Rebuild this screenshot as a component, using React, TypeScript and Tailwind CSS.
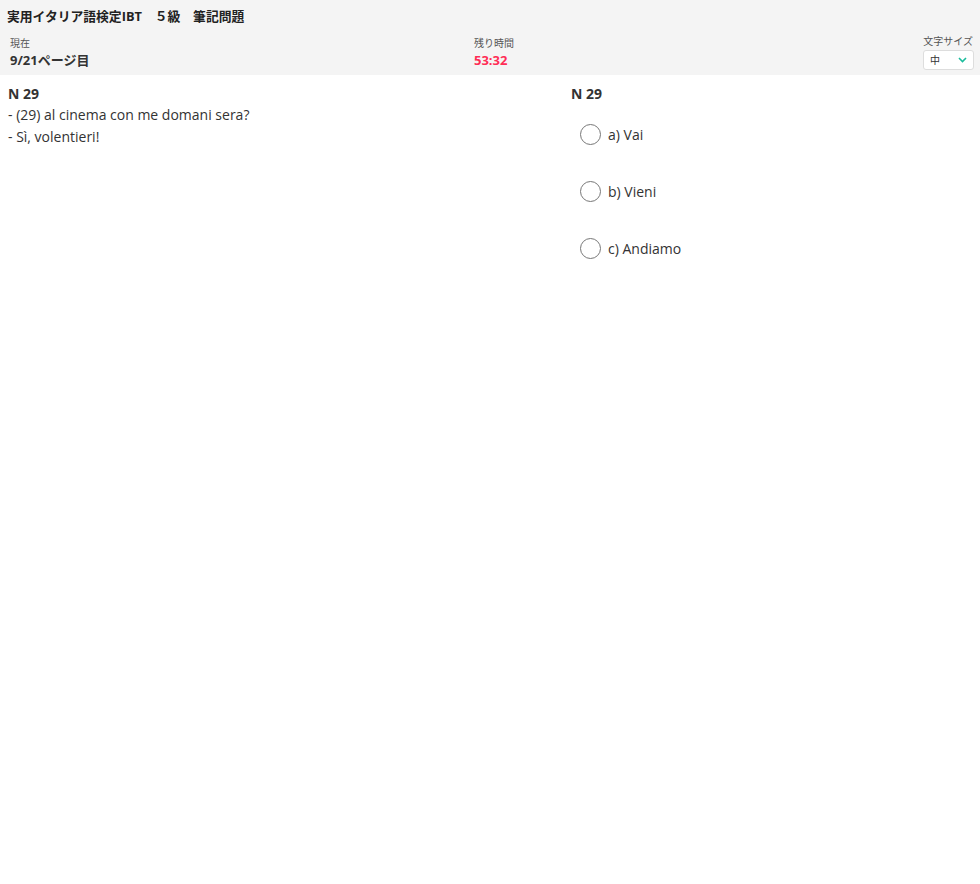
import React, { useState } from "react";

const font = { fontFamily: '"Open Sans", "Noto Sans CJK JP", sans-serif' };

const options = ["a) Vai", "b) Vieni", "c) Andiamo"];

export default function App() {
  const [selected, setSelected] = useState<number | null>(null);

  return (
    <div className="min-h-screen bg-white text-[#333]" style={font}>
      {/* Header */}
      <header className="bg-[#f4f4f4] h-[75px] pl-[7px] pr-[6px] pt-[7px]">
        <h1 className="text-[12.8px] font-bold leading-[18px] text-[#222]">
          実用イタリア語検定IBT　５級　筆記問題
        </h1>
        <div className="flex items-start justify-between mt-[11px] pl-[3px]">
          <div className="w-[300px]">
            <div className="text-[10px] leading-[14px] text-[#555]">現在</div>
            <div className="text-[13px] font-bold leading-[18px] mt-[1px]">9/21ページ目</div>
          </div>
          <div className="w-[300px] pl-[132px]">
            <div className="text-[10px] leading-[14px] text-[#555]">残り時間</div>
            <div className="text-[13px] font-bold leading-[18px] mt-[1px] text-[#ff2d55]">53:32</div>
          </div>
          <div className="w-[300px] flex flex-col items-end">
            <div className="text-[10px] leading-[14px] text-[#555] -mt-[2px] pr-[1px]">文字サイズ</div>
            <div className="mt-[2px] w-[51px] h-[20px] bg-white border border-[#ddd] rounded-[3px] flex items-center justify-between pl-[6px] pr-[6px]">
              <span className="text-[10px] leading-none">中</span>
              <svg width="9" height="6" viewBox="0 0 9 6" fill="none">
                <path d="M1 1l3.5 3.5L8 1" stroke="#1abc9c" strokeWidth="1.6" />
              </svg>
            </div>
          </div>
        </div>
      </header>

      {/* Body */}
      <main className="flex">
        <section className="w-[563px] pl-[8px] pt-[9px]">
          <h2 className="text-[14px] font-bold leading-[20px]">N 29</h2>
          <p className="text-[14px] leading-[22px]">- (29) al cinema con me domani sera?</p>
          <p className="text-[14px] leading-[22px]">- Sì, volentieri!</p>
        </section>
        <section className="flex-1 pl-[8px] pt-[9px]">
          <h2 className="text-[14px] font-bold leading-[20px]">N 29</h2>
          <div className="flex flex-col gap-[36px] mt-[20px] pl-[9px]">
            {options.map((o, i) => (
              <label
                key={o}
                className="flex items-center gap-[7px] cursor-pointer h-[21px]"
                onClick={() => setSelected(i)}
              >
                <span className="w-[21px] h-[21px] rounded-full border border-[#777] bg-white flex items-center justify-center">
                  {selected === i && <span className="w-[11px] h-[11px] rounded-full bg-[#1abc9c]" />}
                </span>
                <span className="text-[14px] leading-[20px]">{o}</span>
              </label>
            ))}
          </div>
        </section>
      </main>
    </div>
  );
}
